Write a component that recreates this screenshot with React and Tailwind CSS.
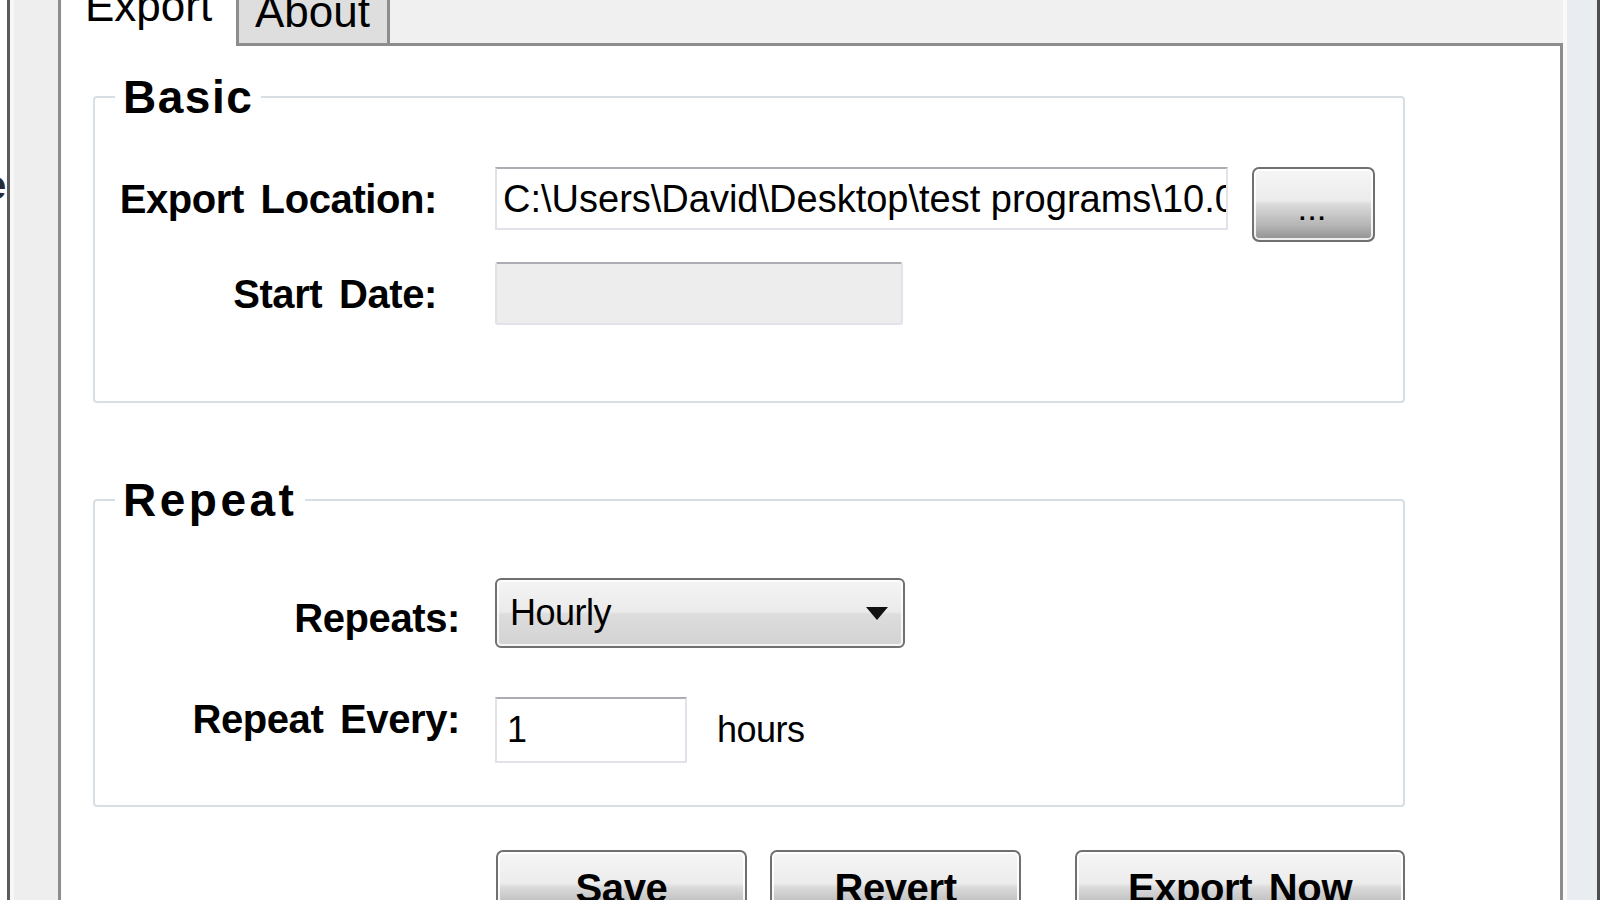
import React from 'react';

// Win7-style glossy push button
function GlossButton({ children, className = '' }) {
    return (
        <button className={`flex items-center justify-center rounded-[7px] border-2 border-[#707070] bg-[linear-gradient(to_bottom,#f6f6f6_0%,#ececec_44%,#dadada_50%,#b4b4b4_80%,#8f8f8f_100%)] shadow-[inset_0_0_0_2px_rgba(255,255,255,0.85)] text-black ${className}`}>
            {children}
        </button>
    );
}

function TextBox({ value = '', disabled = false, className = '' }) {
    return (
        <div className={`flex items-center overflow-hidden whitespace-nowrap border-2 border-[#e2e3ea] border-t-[#abadb3] ${disabled ? 'bg-[#ededed]' : 'bg-white'} ${className}`}>
            {value}
        </div>
    );
}

function Group({ title, titleClass = '', className = '', children }) {
    return (
        <fieldset className={`w-[1312px] rounded-[4px] border-2 border-[#d7dee4] ${className}`}>
            <legend className={`ml-[20px] px-[8px] text-[46px] font-bold leading-none text-black ${titleClass}`}>{title}</legend>
            {children}
        </fieldset>
    );
}

export default function App() {
    return (
        <div className="flex h-[900px] w-[1600px] overflow-hidden bg-[#f0f0f0] font-['Liberation_Sans',Arial,sans-serif] text-black">
            {/* left window edge */}
            <div className="w-[7px] shrink-0 overflow-hidden bg-white">
                <span className="block ml-[-16px] mt-[165px] text-[40px] font-bold leading-none text-[#2a2a35]">e</span>
            </div>
            <div className="w-[3px] shrink-0 bg-[#5b5b5b]" />
            <div className="w-[48px] shrink-0 border-l-[4px] border-[#f7f7f7] bg-[#eeeeee]" />

            {/* tab control */}
            <div className="flex w-[1505px] shrink-0 flex-col">
                <div className="flex h-[46px] shrink-0 overflow-hidden">
                    <div className="flex w-[181px] items-end border-x-[3px] border-[#8d8d8d] bg-white pb-[18px] pl-[24px]">
                        <span className="text-[44px] leading-none">Export</span>
                    </div>
                    <div className="flex w-[151px] items-end border-r-[3px] border-b-[3px] border-[#8d8d8d] bg-[#dedede] pb-[9px] pl-[16px]">
                        <span className="text-[44px] leading-none">About</span>
                    </div>
                    <div className="flex-1 border-b-[3px] border-[#8d8d8d]" />
                </div>

                <div className="flex-1 border-x-[3px] border-[#8d8d8d] bg-white pl-[32px]">
                    <Group title="Basic" titleClass="tracking-[1.5px]" className="mt-[28px] pb-[76px] pt-[47px]">
                        <div className="flex items-start">
                            <div className="flex h-[63px] w-[342px] items-center justify-end text-[40px] font-bold leading-none tracking-[-0.4px] [word-spacing:6px]">Export Location:</div>
                            <TextBox value="C:\Users\David\Desktop\test programs\10.0.1\export" className="ml-[58px] h-[63px] w-[733px] pl-[6px] text-[38px] leading-none" />
                            <GlossButton className="ml-[24px] h-[75px] w-[123px] items-end pb-[16px]">
                                <span className="text-[24px] font-bold leading-none tracking-[3px]">...</span>
                            </GlossButton>
                        </div>
                        <div className="mt-[20px] flex items-start">
                            <div className="flex h-[63px] w-[342px] items-center justify-end text-[40px] font-bold leading-none tracking-[-0.4px] [word-spacing:6px]">Start Date:</div>
                            <TextBox disabled className="ml-[58px] h-[63px] w-[408px] rounded-[3px]" />
                        </div>
                    </Group>

                    <Group title="Repeat" titleClass="tracking-[3.5px]" className="mt-[74px] pb-[42px] pt-[55px]">
                        <div className="flex items-start">
                            <div className="mt-[20px] w-[365px] text-right text-[40px] font-bold leading-none tracking-[-0.4px]">Repeats:</div>
                            <div className="ml-[35px] flex h-[70px] w-[410px] items-center justify-between rounded-[6px] border-2 border-[#707070] bg-[linear-gradient(to_bottom,#f4f4f4_0%,#ebebeb_48%,#dddddd_52%,#d3d3d3_100%)] pl-[13px] pr-[15px] shadow-[inset_0_0_0_2px_rgba(255,255,255,0.8)]">
                                <span className="text-[36px] leading-none tracking-[-0.5px]">Hourly</span>
                                <svg width="22" height="13" viewBox="0 0 22 13"><path d="M0 0h22L11 13z" fill="#111" /></svg>
                            </div>
                        </div>
                        <div className="mt-[49px] flex items-start">
                            <div className="mt-[2px] w-[365px] text-right text-[40px] font-bold leading-none tracking-[-0.4px] [word-spacing:6px]">Repeat Every:</div>
                            <TextBox value="1" className="ml-[35px] h-[66px] w-[192px] pl-[10px] text-[36px] leading-none" />
                            <div className="ml-[30px] flex h-[66px] items-center text-[36px] leading-none tracking-[-0.5px]">hours</div>
                        </div>
                    </Group>

                    <div className="ml-[403px] mt-[43px] flex">
                        <GlossButton className="h-[75px] w-[251px]">
                            <span className="text-[40px] font-bold leading-none tracking-[-0.4px]">Save</span>
                        </GlossButton>
                        <GlossButton className="ml-[23px] h-[75px] w-[251px]">
                            <span className="text-[40px] font-bold leading-none tracking-[-0.4px]">Revert</span>
                        </GlossButton>
                        <GlossButton className="ml-[54px] h-[75px] w-[330px]">
                            <span className="text-[40px] font-bold leading-none tracking-[-0.4px] [word-spacing:6px]">Export Now</span>
                        </GlossButton>
                    </div>
                </div>
            </div>

            {/* right window edge */}
            <div className="w-[34px] shrink-0 border-l-[4px] border-[#f9f9f9] bg-[#e9ecf0]" />
            <div className="w-[3px] shrink-0 bg-[#4e4e4e]" />
        </div>
    );
}
